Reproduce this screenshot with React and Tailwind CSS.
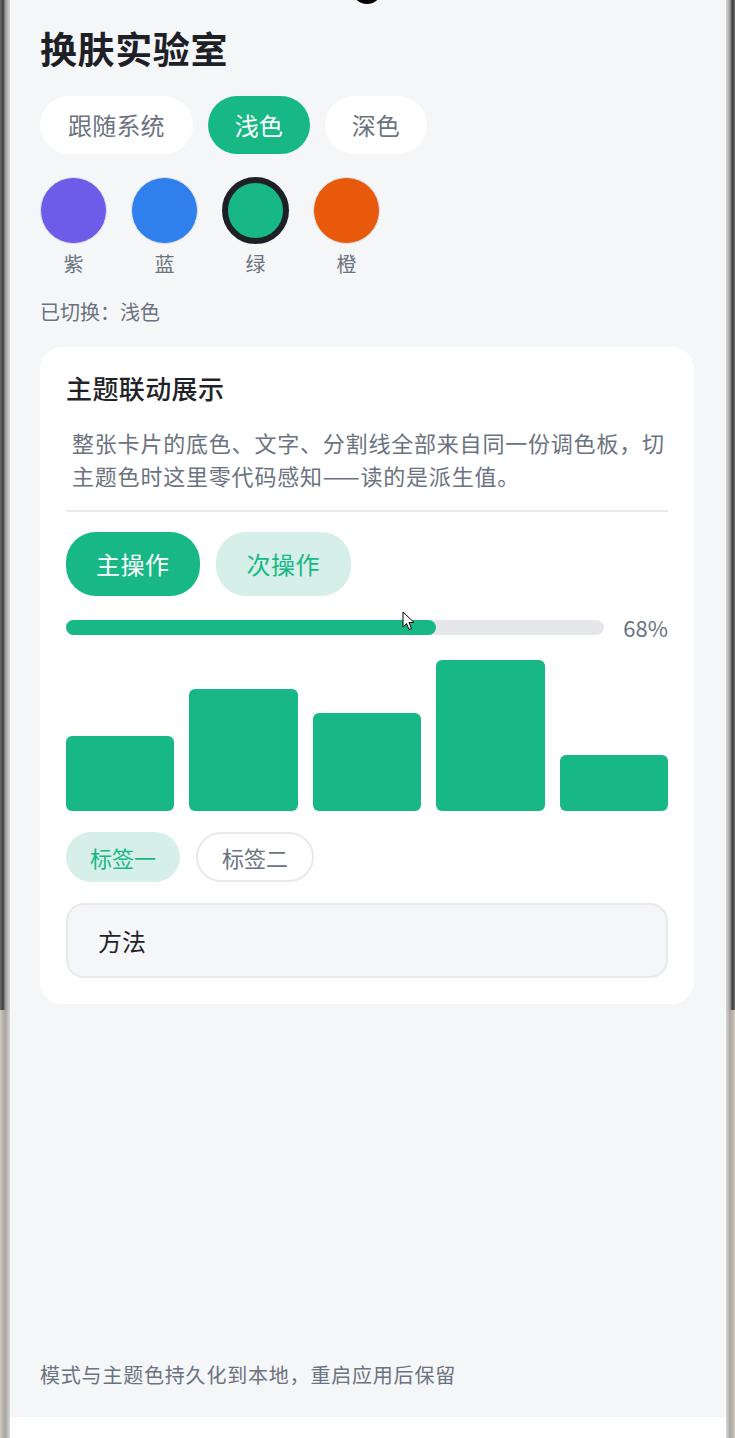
import React from "react";

const GREEN = "#17b885";

function Bezel({ side }) {
  const top =
    side === "left"
      ? "bg-[linear-gradient(to_right,#6e6e6e,#3c3c3c_30%,#9c9c9c_55%,#d6d6d6)]"
      : "bg-[linear-gradient(to_left,#6e6e6e,#3c3c3c_30%,#9c9c9c_55%,#d6d6d6)]";
  const bottom =
    side === "left"
      ? "bg-[linear-gradient(to_right,#d2cbbd,#b8b2a8_30%,#a6a6a6_55%,#d8d8d8)]"
      : "bg-[linear-gradient(to_left,#d2cbbd,#b8b2a8_30%,#a6a6a6_55%,#d8d8d8)]";
  return (
    <div className={`flex flex-col ${side === "left" ? "w-[10px]" : "w-[9px]"}`}>
      <div className={`flex-1 ${top}`} />
      <div className={`h-[428px] ${bottom}`} />
    </div>
  );
}

function Swatch({ color, label, selected }) {
  return (
    <div className="flex w-[67px] flex-col items-center">
      <div
        className={`h-[67px] w-[67px] rounded-full ${
          selected ? "border-[6px] border-[#1d2127]" : "border border-[#dcdfe6]"
        }`}
        style={{ backgroundColor: color }}
      />
      <div className="mt-[6px] text-[20px] leading-[28px] text-[#6b7280]">{label}</div>
    </div>
  );
}

const bars = [50, 81, 65, 100, 37];

export default function App() {
  return (
    <div className="relative flex h-[1438px] w-[735px] overflow-hidden bg-[#d6d6d6] font-['Noto_Sans_CJK_SC','Noto_Sans',sans-serif]">
      <Bezel side="left" />
      <div className="flex flex-1 flex-col bg-[#f5f6f8]">
        <div className="flex flex-1 flex-col pl-[30px] pr-[32px] pt-[26px]">
          <h1 className="text-[37px] font-bold leading-[44px] tracking-[0.6px] text-[#1d2127]">换肤实验室</h1>

          <div className="mt-[26px] flex gap-[15px]">
            <div className="flex h-[58px] items-center rounded-full bg-white px-[28px] text-[24px] tracking-[0.2px] text-[#6b7280]">
              跟随系统
            </div>
            <div className="flex h-[58px] items-center rounded-full bg-[#17b885] px-[27px] text-[24px] text-white">
              浅色
            </div>
            <div className="flex h-[58px] items-center rounded-full bg-white px-[27px] text-[24px] text-[#6b7280]">
              深色
            </div>
          </div>

          <div className="mt-[23px] flex gap-[24px]">
            <Swatch color="#6c5ce7" label="紫" />
            <Swatch color="#2f80ed" label="蓝" />
            <Swatch color={GREEN} label="绿" selected />
            <Swatch color="#e8590c" label="橙" />
          </div>

          <div className="mt-[20px] text-[20px] leading-[28px] text-[#6b7280]">已切换：浅色</div>

          <div className="mt-[21px] rounded-[22px] bg-white px-[26px] pb-[26px] pt-[24px]">
            <div className="text-[26px] font-medium leading-[34px] tracking-[0.4px] text-[#1f2329]">主题联动展示</div>
            <p className="mt-[21px] pl-[6px] text-[22px] leading-[33px] tracking-[0.8px] text-[#6b7280]">
              整张卡片的底色、文字、分割线全部来自同一份调色板，切主题色时这里零代码感知——读的是派生值。
            </p>
            <div className="mt-[18px] h-[2px] bg-[#e8e9ec]" />

            <div className="mt-[20px] flex gap-[16px]">
              <div className="flex h-[64px] items-center rounded-[30px] bg-[#17b885] px-[30px] text-[24px] tracking-[0.5px] text-white">
                主操作
              </div>
              <div className="flex h-[64px] items-center rounded-[30px] bg-[#d6efe9] px-[31px] text-[24px] tracking-[0.5px] text-[#17b885]">
                次操作
              </div>
            </div>

            <div className="mt-[16px] flex h-[30px] items-center gap-[19px]">
              <div className="h-[15px] flex-1 rounded-full bg-[#e6e7ea]">
                <div className="h-full rounded-full bg-[#17b885]" style={{ width: "68.8%" }} />
              </div>
              <div className="text-[22px] leading-[30px] text-[#6b7280]">68%</div>
            </div>

            <div className="mt-[18px] flex h-[151px] items-end gap-[15px]">
              {bars.map((h, i) => (
                <div key={i} className="flex-1 rounded-[6px] bg-[#17b885]" style={{ height: `${h}%` }} />
              ))}
            </div>

            <div className="mt-[21px] flex gap-[16px]">
              <div className="flex h-[50px] items-center rounded-full bg-[#d6efe9] px-[24px] text-[22px] text-[#17b885]">
                标签一
              </div>
              <div className="flex h-[50px] items-center rounded-full border-2 border-[#e8e9ec] bg-white px-[24px] text-[22px] text-[#6b7280]">
                标签二
              </div>
            </div>

            <div className="mt-[21px] flex h-[75px] items-center rounded-[18px] border-2 border-[#e8e9ec] bg-[#f5f6f8] px-[30px] text-[24px] text-[#1f2329]">
              方法
            </div>
          </div>

          <div className="flex-1" />
          <div className="pb-[28px] text-[20px] leading-[28px] tracking-[0.8px] text-[#6b7280]">
            模式与主题色持久化到本地，重启应用后保留
          </div>
        </div>
        <div className="h-[21px] bg-white" />
      </div>
      <Bezel side="right" />

      <div className="absolute left-[352px] top-[-26px] h-[30px] w-[30px] rounded-full bg-black" />

      <svg className="absolute left-[402px] top-[611px]" width="14" height="20" viewBox="0 0 14 20">
        <path d="M1 1 L1 16 L4.5 12.5 L7 18.5 L9.5 17.5 L7 11.5 L12 11.5 Z" fill="white" stroke="black" strokeWidth="1" strokeLinejoin="round" />
      </svg>
    </div>
  );
}
